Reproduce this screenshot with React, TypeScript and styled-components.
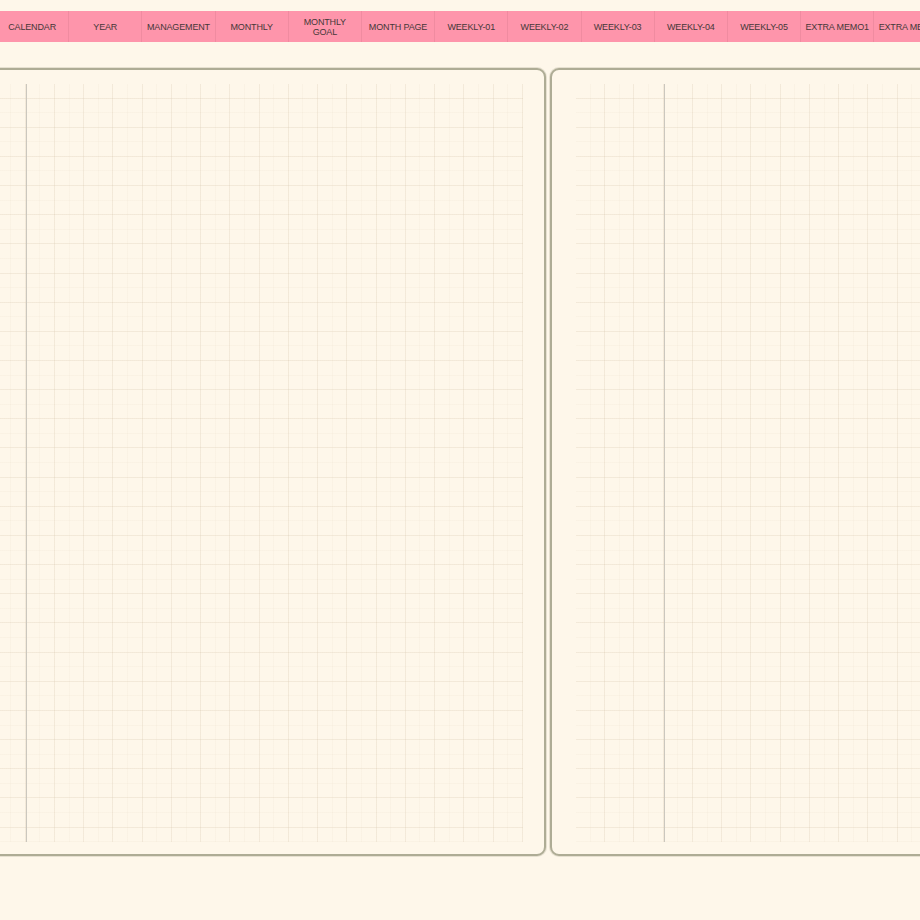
import styled, { createGlobalStyle } from "styled-components";

const colors = {
  paper: "#fef7ea",
  tab: "#fe95ab",
  tabDivider: "rgba(120, 60, 70, 0.1)",
  tabText: "#453838",
  pageBorder: "#aeac95",
  minor: "rgba(214, 196, 170, 0.09)",
  major: "rgba(206, 188, 162, 0.17)",
  marginLine: "#cbc7be",
};

const CELL_X = 14.62;
const CELL_Y = 14.58;

const GlobalStyle = createGlobalStyle`
  html, body {
    margin: 0;
    padding: 0;
    background: ${colors.paper};
    overflow: hidden;
  }
  body {
    font-family: "Liberation Sans", Arial, sans-serif;
  }
`;

const Screen = styled.div`
  width: 920px;
  height: 920px;
  overflow: hidden;
  background: ${colors.paper};
  padding-top: 11px;
  box-sizing: border-box;
`;

const TabBar = styled.nav`
  display: flex;
  height: 31px;
  margin-left: -4px;
  background: ${colors.tab};
`;

const Tab = styled.div`
  flex: 0 0 73.2px;
  display: flex;
  align-items: center;
  justify-content: center;
  text-align: center;
  box-sizing: border-box;
  border-right: 1px solid ${colors.tabDivider};
  color: ${colors.tabText};
  font-size: 9px;
  line-height: 10px;
  letter-spacing: -0.15px;
  text-transform: uppercase;
  white-space: pre-line;
`;

const Spread = styled.div`
  display: flex;
  gap: 4px;
  margin-top: 26px;
  margin-left: -88px;
`;

const Page = styled.section`
  flex: 0 0 634px;
  height: 788px;
  box-sizing: border-box;
  display: flex;
  padding: 14px 21px 12px 24px;
  background: ${colors.paper};
  border: 2px solid ${colors.pageBorder};
  border-radius: 9px;
  box-shadow: 0 0 0 1px rgba(174, 172, 149, 0.3);
`;

/* graph paper: faint minor cells, a slightly darker line every second cell, and a ruled margin */
const Grid = styled.div<{ $margin: number }>`
  flex: 1;
  background-image:
    linear-gradient(
      to right,
      transparent ${(p) => p.$margin}px,
      ${colors.marginLine} ${(p) => p.$margin}px,
      ${colors.marginLine} ${(p) => p.$margin + 1.5}px,
      transparent ${(p) => p.$margin + 1.5}px
    ),
    repeating-linear-gradient(
      to right,
      transparent 0 ${CELL_X * 2 - 1}px,
      ${colors.major} ${CELL_X * 2 - 1}px ${CELL_X * 2}px
    ),
    repeating-linear-gradient(
      to right,
      transparent 0 ${CELL_X - 1}px,
      ${colors.minor} ${CELL_X - 1}px ${CELL_X}px
    ),
    repeating-linear-gradient(
      to bottom,
      transparent 0 ${CELL_Y - 1}px,
      ${colors.major} ${CELL_Y - 1}px ${CELL_Y}px,
      transparent ${CELL_Y}px ${CELL_Y * 2}px
    ),
    repeating-linear-gradient(
      to bottom,
      transparent 0 ${CELL_Y - 1}px,
      ${colors.minor} ${CELL_Y - 1}px ${CELL_Y}px
    );
`;

const tabs = [
  "Calendar",
  "Year",
  "Management",
  "Monthly",
  "Monthly\nGoal",
  "Month Page",
  "Weekly-01",
  "Weekly-02",
  "Weekly-03",
  "Weekly-04",
  "Weekly-05",
  "Extra Memo1",
  "Extra Memo2",
  "Extra Memo3",
];

const App = (): JSX.Element => {
  return (
    <>
      <GlobalStyle />
      <Screen>
        <TabBar>
          {tabs.map((t) => (
            <Tab key={t}>{t}</Tab>
          ))}
        </TabBar>
        <Spread>
          <Page>
            <Grid $margin={CELL_X * 6} />
          </Page>
          <Page>
            <Grid $margin={CELL_X * 6} />
          </Page>
        </Spread>
      </Screen>
    </>
  );
};

export default App;
